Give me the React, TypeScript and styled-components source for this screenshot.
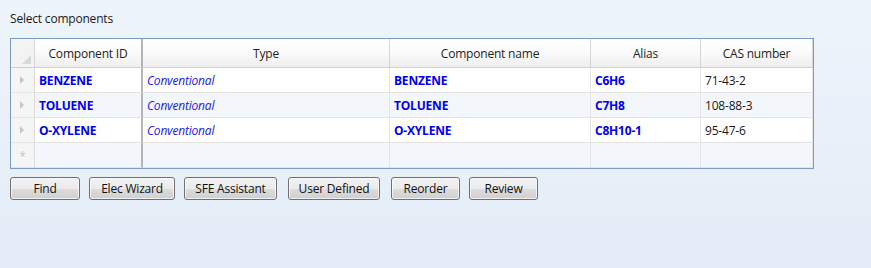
import React from "react";
import styled, { createGlobalStyle } from "styled-components";

const Global = createGlobalStyle`
  html, body { margin: 0; padding: 0; }
  body {
    width: 871px;
    height: 268px;
    overflow: hidden;
    background: linear-gradient(180deg, #eef4fb 0%, #e3ecf7 100%);
    font-family: "Open Sans", "Noto Sans", sans-serif;
    font-size: 12px;
    color: #1a1a1a;
  }
`;

const Page = styled.div`
  padding: 10px 10px 0 10px;
  display: flex;
  flex-direction: column;
`;

const Title = styled.div`
  height: 18px;
  line-height: 18px;
  font-size: 12px;
  margin-bottom: 10px;
  letter-spacing: -0.2px;
`;

const COLS = "24px 108px 247px 201px 110px 112px";

const Grid = styled.div`
  width: 802px;
  border: 1px solid #7a9bc4;
  background: #fff;
  display: grid;
  grid-template-columns: ${COLS};
  grid-auto-rows: 25px;
  grid-template-rows: 29px;
`;

const HeadCell = styled.div<{ $frozen?: boolean }>`
  background: linear-gradient(180deg, #ffffff 0%, #fbfbfb 45%, #eeeeee 100%);
  border-right: ${(p) => (p.$frozen ? "2px solid #b5b5b5" : "1px solid #d6d6d6")};
  border-bottom: 1px solid #d0d0d0;
  display: flex;
  align-items: center;
  justify-content: center;
  font-size: 12px;
  letter-spacing: -0.2px;
  color: #1e1e1e;
  padding-top: 1px;
`;

const Corner = styled.div`
  background: #f3f3f3;
  border-right: 1px solid #d6d6d6;
  border-bottom: 1px solid #d0d0d0;
  position: relative;
`;

const CornerMark = styled.div`
  position: absolute;
  right: 3px;
  bottom: 3px;
  width: 0;
  height: 0;
  border-left: 9px solid transparent;
  border-bottom: 9px solid #d9d9d9;
`;

const RowHead = styled.div`
  background: #f5f5f5;
  border-right: 1px solid #dadada;
  border-bottom: 1px solid #e4e4e4;
  display: flex;
  align-items: center;
  justify-content: center;
  color: #c4c4c4;
  font-size: 12px;
  padding-top: 3px;
  box-sizing: border-box;
`;

const Arrow = styled.div`
  width: 0;
  height: 0;
  border-top: 4px solid transparent;
  border-bottom: 4px solid transparent;
  border-left: 4px solid #c6c6c6;
  margin-right: 2px;
  margin-top: -3px;
`;

const Cell = styled.div<{ $alt?: boolean; $frozen?: boolean }>`
  background: ${(p) => (p.$alt ? "#f3f7fb" : "#ffffff")};
  border-right: ${(p) => (p.$frozen ? "2px solid #b5b5b5" : "1px solid #e4e4e4")};
  border-bottom: 1px solid #e4e4e4;
  display: flex;
  align-items: center;
  padding-left: 4px;
  padding-top: 1px;
  white-space: nowrap;
  overflow: hidden;
`;

const Bold = styled.span`
  color: #0000f0;
  font-weight: 700;
  letter-spacing: -0.2px;
`;

const Ital = styled.span`
  color: #2020e8;
  font-style: italic;
  letter-spacing: -0.2px;
`;

const Plain = styled.span`
  color: #1a1a1a;
  letter-spacing: -0.2px;
`;

const Buttons = styled.div`
  display: flex;
  margin-top: 8px;
`;

const Btn = styled.button<{ $w: number; $gap: number }>`
  width: ${(p) => p.$w}px;
  height: 23px;
  margin-right: ${(p) => p.$gap}px;
  padding: 0;
  border: 1px solid #707070;
  border-radius: 3px;
  background: linear-gradient(180deg, #f2f2f2 0%, #ebebeb 50%, #dddddd 51%, #cfcfcf 100%);
  font-family: "Open Sans", "Noto Sans", sans-serif;
  font-size: 12px;
  letter-spacing: -0.2px;
  color: #111;
  box-shadow: inset 0 0 0 1px rgba(255, 255, 255, 0.7);
`;

const rows = [
  { id: "BENZENE", name: "BENZENE", alias: "C6H6", cas: "71-43-2" },
  { id: "TOLUENE", name: "TOLUENE", alias: "C7H8", cas: "108-88-3" },
  { id: "O-XYLENE", name: "O-XYLENE", alias: "C8H10-1", cas: "95-47-6" },
];

const buttons: [string, number, number][] = [
  ["Find", 70, 9],
  ["Elec Wizard", 86, 9],
  ["SFE Assistant", 93, 11],
  ["User Defined", 92, 11],
  ["Reorder", 69, 9],
  ["Review", 69, 0],
];

export default function App() {
  return (
    <>
      <Global />
      <Page>
        <Title>Select components</Title>
        <Grid>
          <Corner>
            <CornerMark />
          </Corner>
          <HeadCell $frozen>Component ID</HeadCell>
          <HeadCell>Type</HeadCell>
          <HeadCell>Component name</HeadCell>
          <HeadCell>Alias</HeadCell>
          <HeadCell>CAS number</HeadCell>
          {rows.map((r, i) => {
            const alt = i % 2 === 1;
            return (
              <React.Fragment key={r.id}>
                <RowHead>
                  <Arrow />
                </RowHead>
                <Cell $alt={alt} $frozen>
                  <Bold>{r.id}</Bold>
                </Cell>
                <Cell $alt={alt}>
                  <Ital>Conventional</Ital>
                </Cell>
                <Cell $alt={alt}>
                  <Bold>{r.name}</Bold>
                </Cell>
                <Cell $alt={alt}>
                  <Bold>{r.alias}</Bold>
                </Cell>
                <Cell $alt={alt}>
                  <Plain>{r.cas}</Plain>
                </Cell>
              </React.Fragment>
            );
          })}
          <RowHead>*</RowHead>
          <Cell $alt $frozen />
          <Cell $alt />
          <Cell $alt />
          <Cell $alt />
          <Cell $alt />
        </Grid>
        <Buttons>
          {buttons.map(([label, w, g]) => (
            <Btn key={label} $w={w} $gap={g}>
              {label}
            </Btn>
          ))}
        </Buttons>
      </Page>
    </>
  );
}
